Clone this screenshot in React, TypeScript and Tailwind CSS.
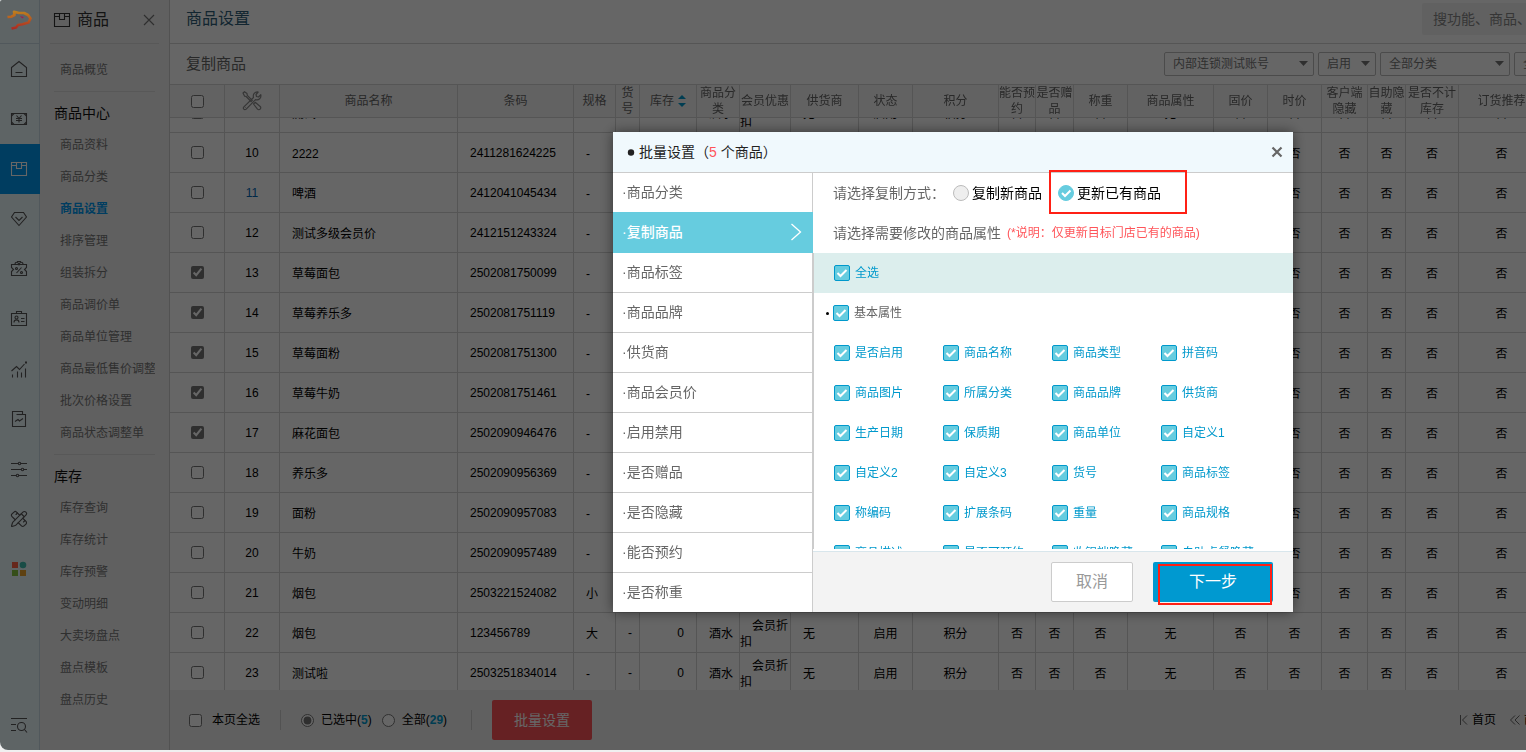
import { useEffect, useRef, useState } from 'react'
import type { ReactNode } from 'react'
import { PencilRuler } from 'lucide-react'

interface Product {
    no: number
    name: string
    code: string
    spec: string
    checked?: boolean
    visited?: boolean
}

interface Column {
    title: string
    width: number
    sortable?: boolean
}

const columns: Column[] = [
    { title: '商品名称', width: 178 },
    { title: '条码', width: 116 },
    { title: '规格', width: 42 },
    { title: '货号', width: 24 },
    { title: '库存', width: 57, sortable: true },
    { title: '商品分类', width: 43 },
    { title: '会员优惠', width: 51 },
    { title: '供货商', width: 68 },
    { title: '状态', width: 54 },
    { title: '积分', width: 86 },
    { title: '能否预约', width: 37 },
    { title: '是否赠品', width: 38 },
    { title: '称重', width: 54 },
    { title: '商品属性', width: 86 },
    { title: '固价', width: 54 },
    { title: '时价', width: 54 },
    { title: '客户端隐藏', width: 46 },
    { title: '自助隐藏', width: 38 },
    { title: '是否不计库存', width: 53 },
    { title: '订货推荐', width: 86 }
]

const products: Product[] = [
    { no: 9, name: '测试', code: '2411281623', spec: '-' },
    { no: 10, name: '2222', code: '2411281624225', spec: '-' },
    { no: 11, name: '啤酒', code: '2412041045434', spec: '-', visited: true },
    { no: 12, name: '测试多级会员价', code: '2412151243324', spec: '-' },
    { no: 13, name: '草莓面包', code: '2502081750099', spec: '-', checked: true },
    { no: 14, name: '草莓养乐多', code: '2502081751119', spec: '-', checked: true },
    { no: 15, name: '草莓面粉', code: '2502081751300', spec: '-', checked: true },
    { no: 16, name: '草莓牛奶', code: '2502081751461', spec: '-', checked: true },
    { no: 17, name: '麻花面包', code: '2502090946476', spec: '-', checked: true },
    { no: 18, name: '养乐多', code: '2502090956369', spec: '-' },
    { no: 19, name: '面粉', code: '2502090957083', spec: '-' },
    { no: 20, name: '牛奶', code: '2502090957489', spec: '-' },
    { no: 21, name: '烟包', code: '2503221524082', spec: '小' },
    { no: 22, name: '烟包', code: '123456789', spec: '大' },
    { no: 23, name: '测试啦', code: '2503251834014', spec: '-' }
]

const menuSections = [
    {
        title: '商品中心',
        items: ['商品资料', '商品分类', '商品设置', '排序管理', '组装拆分', '商品调价单', '商品单位管理', '商品最低售价调整', '批次价格设置', '商品状态调整单']
    },
    {
        title: '库存',
        items: ['库存查询', '库存统计', '库存预警', '变动明细', '大卖场盘点', '盘点模板', '盘点历史']
    }
]

const batchTabs = ['商品分类', '复制商品', '商品标签', '商品品牌', '供货商', '商品会员价', '启用禁用', '是否赠品', '是否隐藏', '能否预约', '是否称重']

const attributes = [
    '是否启用', '商品名称', '商品类型', '拼音码',
    '商品图片', '所属分类', '商品品牌', '供货商',
    '生产日期', '保质期', '商品单位', '自定义1',
    '自定义2', '自定义3', '货号', '商品标签',
    '称编码', '扩展条码', '重量', '商品规格',
    '商品描述', '是否可预约', '收银端隐藏', '自助点餐隐藏'
]

function Icon({ children }: { children: ReactNode }) {
    return (
        <svg width="18" height="18" viewBox="0 0 18 18" fill="none" stroke="currentColor" strokeWidth="1.1">
            {children}
        </svg>
    )
}

const boxPaths = (
    <>
        <path d="M1.5 2.5h15v13h-15z" />
        <path d="M6.5 2.5v6h5v-6M1.5 5.5h5M11.5 5.5h5" />
    </>
)

const railItems: { label: string; icon: ReactNode }[] = [
    {
        label: '首页',
        icon: <Icon><path d="M1.5 7.5 9 1.5l7.5 6v9h-15zM5.5 12.5h7" /></Icon>
    },
    {
        label: '销售',
        icon: (
            <Icon>
                <path d="M1.5 3.5h15v11h-15z" />
                <path d="M1.5 6 4 3.5M14 3.5 16.5 6M1.5 12 4 14.5M14 14.5l2.5-2.5" />
                <path d="m6.5 5.5 2.5 3 2.5-3M6 8.5h6M6 10.5h6M9 8.5v4" />
            </Icon>
        )
    },
    { label: '商品', icon: <Icon>{boxPaths}</Icon> },
    {
        label: '会员',
        icon: <Icon><path d="M4.5 2.5h9l3 4.5L9 15.5 1.5 7z" /><path d="m5.5 7 3.5 3.5L12.5 7" /></Icon>
    },
    {
        label: '营销',
        icon: (
            <Icon>
                <path d="M1.5 4.5h15v3l-2 2 2 2v4h-15v-4l2-2-2-2z" />
                <path d="M5 4.5c0-3 3-3 4 0 1-3 4-3 4 0M7 1.5h4" />
                <path d="m6.5 13 5-5.500" />
                <circle cx="6.5" cy="8.5" r="1" />
                <circle cx="11.5" cy="12.5" r="1" />
            </Icon>
        )
    },
    {
        label: '员工',
        icon: (
            <Icon>
                <path d="M1.5 3.5h15v12h-15z" />
                <path d="M6.5 3.5v-2h5v2" />
                <circle cx="6.5" cy="7.5" r="1.5" />
                <path d="M4 12.5c0-3.500 5-3.500 5 0M11 8.5h3.500M11 11.5h3.500" />
            </Icon>
        )
    },
    {
        label: '数据',
        icon: (
            <Icon>
                <path d="m1.5 11 5-4.500 3 3 5-5.500" />
                <path d="M2.5 14.5v3M7.5 11.5v6M11.5 12.500v5M15.5 8.5v9" />
                <path d="M15 2.5h2" strokeWidth="2" />
            </Icon>
        )
    },
    {
        label: '报表',
        icon: (
            <Icon>
                <path d="M2.5 1.5h10v3h3v12h-13z" />
                <path d="M6.5 4.5h6" />
                <path d="m5 11.500 3-2 1.500 1.500 3.500-2.500" />
            </Icon>
        )
    },
    {
        label: '设置',
        icon: (
            <Icon>
                <path d="M1 3.5h7M11 3.5h6M1 9.5h10M14 9.5h3M1 15.5h5M9 15.5h8" />
                <circle cx="9.5" cy="3.5" r="1.200" />
                <circle cx="12.500" cy="9.5" r="1.200" />
                <circle cx="7.5" cy="15.5" r="1.200" />
            </Icon>
        )
    },
    { label: '工具', icon: <PencilRuler size={18} strokeWidth={1.5} /> },
    {
        label: '应用',
        icon: (
            <svg width="18" height="18" viewBox="0 0 18 18">
                <rect x="2" y="2" width="6" height="6" fill="#ff6347" />
                <circle cx="13" cy="5" r="3.300" fill="#3fbfae" />
                <rect x="2" y="10" width="6" height="6" fill="#86c440" />
                <rect x="10" y="10" width="6" height="6" fill="#eba22b" />
            </svg>
        )
    }
]

function Logo() {
    return (
        <svg width="26" height="22" viewBox="0 0 26 22" fill="none" className="z-30">
            <defs>
                <linearGradient id="logo-stroke" x1="0" y1="0" x2="0" y2="22" gradientUnits="userSpaceOnUse">
                    <stop offset="0" stopColor="#c08a1c" />
                    <stop offset="0.5" stopColor="#b8561f" />
                    <stop offset="1" stopColor="#a81f24" />
                </linearGradient>
            </defs>
            <path
                d="M1.500 8 5 7.800 8.500 6 8 2.800 13 4h5l4 2 2.500 3.500-2 4-6 1.800-4.500.7-2 2.500-4.500 1"
                stroke="url(#logo-stroke)"
                strokeWidth="2.600"
                strokeLinejoin="round"
            />
            <path d="m14 7 4 1-1.800 1.500z" fill="#a01c50" />
        </svg>
    )
}

function Rail() {
    return (
        <aside className="flex w-10 shrink-0 flex-col border-r border-[#cbdde5] bg-[#ecf9fd] text-[#555]">
            <a href="#home" aria-label="首页" className="flex h-11 shrink-0 items-center border-b border-[#cbdde5] pb-1 pl-1.5">
                <Logo />
            </a>
            {railItems.map(item => (
                <button
                    key={item.label}
                    aria-label={item.label}
                    className={`flex h-[50px] w-10 shrink-0 items-center pl-2.5 ${item.label === '商品' ? 'bg-[#0099f0] text-white' : ''}`}
                >
                    {item.icon}
                </button>
            ))}
            <button aria-label="搜索菜单" className="mt-auto flex h-[50px] w-10 items-center pl-2.5">
                <Icon>
                    <path d="M1 2.5h16M1 8.5h5M1 14.5h5" />
                    <circle cx="11.5" cy="10.5" r="4" />
                    <path d="m14.500 13.500 2.500 3" />
                </Icon>
            </button>
        </aside>
    )
}

function SideMenu() {
    return (
        <aside className="flex w-[130px] shrink-0 flex-col border-r border-[#ccc] bg-[#f0f0f0]">
            <div className="mx-2.5 flex h-11 items-center border-b border-[#ddd] pb-1 text-[#333]">
                <div className="flex flex-1 items-center gap-1.5 pl-[3px]">
                    <Icon>{boxPaths}</Icon>
                    <h2 className="text-base leading-6">商品</h2>
                </div>
                <button aria-label="关闭菜单" className="pr-1 text-[#777]">
                    <svg width="12" height="12" viewBox="0 0 12 12" stroke="currentColor" strokeWidth="1.2">
                        <path d="m1 1 10 10M11 1 1 11" />
                    </svg>
                </button>
            </div>
            <nav className="ml-3.5 w-[101px] overflow-hidden pt-2.5 text-xs whitespace-nowrap text-[#777]">
                <a href="#overview" className="flex h-8 items-center pl-1.5">商品概览</a>
                {menuSections.map(section => (
                    <div key={section.title} className="mt-[5px] border-t border-[#ddd]">
                        <h3 className="flex h-[37px] items-center pt-[5px] text-sm text-[#111]">{section.title}</h3>
                        {section.items.map(item => (
                            <a
                                key={item}
                                href="#menu"
                                className={`flex h-8 items-center pl-1.5 ${item === '商品设置' ? 'font-bold text-[#0099f0]' : ''}`}
                            >
                                {item}
                            </a>
                        ))}
                    </div>
                ))}
            </nav>
        </aside>
    )
}

function FilterSelect({ label, value, className }: { label: string; value: string; className: string }) {
    return (
        <div className={`relative shrink-0 ${className}`}>
            <select
                aria-label={label}
                className="h-6 w-full appearance-none rounded-xs border border-[#bbb] bg-transparent pr-5 pl-2 text-xs text-[#777]"
            >
                <option>{value}</option>
            </select>
            <svg className="pointer-events-none absolute top-2.5 right-1.5" width="9" height="5" viewBox="0 0 9 5" fill="#777">
                <path d="M0 0h9L4.500 5z" />
            </svg>
        </div>
    )
}

function ToolsIcon() {
    return (
        <svg width="20" height="20" viewBox="0 0 20 20" fill="none" stroke="#888" strokeWidth="1.2" strokeLinejoin="round" className="mx-auto">
            <path d="M1 2 2.500.700 5 2.500l.3 1.800 5 5-1.200 1.200-5-5-1.600-.4z" />
            <path d="m11.500 13 1.700-1.700 5 4.200a1.800 1.800 0 0 1-2.700 2.700z" />
            <path d="M11.500 6.500c-.9-3 1.200-6 4.700-5.500l-2.200 2.500.5 2 2 .5 2.300-2.300c.7 3.500-2 5.800-5.300 4.900l-9.300 9.500c-1.700 1.600-4-.6-2.300-2.300z" />
            <path d="m3.300 16.500.4.400" />
        </svg>
    )
}

function ProductTable() {
    const scrollRef = useRef<HTMLDivElement>(null)

    useEffect(() => {
        if (scrollRef.current) scrollRef.current.scrollTop = 25
    }, [])

    return (
        <div ref={scrollRef} className="min-h-0 flex-1 overflow-auto [scrollbar-width:none]">
            <table className="w-[1375px] table-fixed border-separate border-spacing-0 text-xs leading-4 [&_td]:border-r [&_td]:border-b [&_td]:border-[#d4d4d4] [&_td:nth-child(n+8)]:pt-0.5 [&_th]:border [&_th]:border-l-0 [&_th]:border-[#d4d4d4]">
                <colgroup>
                    <col style={{ width: 55 }} />
                    <col style={{ width: 55 }} />
                    {columns.map(col => <col key={col.title} style={{ width: col.width }} />)}
                </colgroup>
                <thead className="sticky top-0 z-10 bg-[#f5f5f5] text-[#666]">
                    <tr className="h-[34px]">
                        <th className="p-0"><input type="checkbox" aria-label="全选商品" className="mx-auto block" /></th>
                        <th className="p-0"><ToolsIcon /></th>
                        {columns.map(col => (
                            <th key={col.title} className="p-0 font-normal">
                                {col.sortable ? (
                                    <button className="mx-auto flex items-center gap-1">
                                        {col.title}
                                        <svg width="8" height="12" viewBox="0 0 8 12" fill="#0099cc">
                                            <path d="M0 4h8L4 0zM0 8h8l-4 4z" />
                                        </svg>
                                    </button>
                                ) : col.title}
                            </th>
                        ))}
                    </tr>
                </thead>
                <tbody className="text-black">
                    {products.map(p => (
                        <tr key={p.no} className="h-10">
                            <td className="p-0">
                                <input type="checkbox" aria-label={`选择${p.name}`} defaultChecked={p.checked} className="mx-auto block accent-[#757575]" />
                            </td>
                            <td className={`p-0 text-center ${p.visited ? 'text-[#0066b4]' : ''}`}>{p.no}</td>
                            <td className="pt-0.5 pl-3">{p.name}</td>
                            <td className="pl-3">{p.code}</td>
                            <td className="pt-0.5 pl-3">{p.spec}</td>
                            <td className="pl-3">-</td>
                            <td className="pr-3 text-right">0</td>
                            <td className="pl-3 whitespace-nowrap">酒水</td>
                            <td className="p-0 indent-3">会员折扣</td>
                            <td className="pl-3">无</td>
                            <td className="p-0 text-center">启用</td>
                            <td className="p-0 text-center">积分</td>
                            <td className="p-0 text-center">否</td>
                            <td className="p-0 text-center">否</td>
                            <td className="p-0 text-center">否</td>
                            <td className="p-0 text-center">无</td>
                            <td className="p-0 text-center">否</td>
                            <td className="p-0 text-center">否</td>
                            <td className="p-0 text-center">否</td>
                            <td className="p-0 text-center">否</td>
                            <td className="p-0 text-center">否</td>
                            <td className="p-0 text-center">否</td>
                        </tr>
                    ))}
                </tbody>
            </table>
        </div>
    )
}

function BottomBar() {
    return (
        <footer className="flex h-[60px] shrink-0 items-center bg-[#f0f0f0] pl-[19px] text-xs text-black">
            <label className="flex items-center gap-2.5">
                <input type="checkbox" />
                本页全选
            </label>
            <span className="ml-5 h-5 w-px bg-[#ccc]" />
            <label className="ml-5 flex items-center gap-[7px]">
                <input type="radio" name="scope" defaultChecked className="accent-[#757575]" />
                <span>已选中(<b className="text-[#0099cc]">5</b>)</span>
            </label>
            <label className="ml-2.5 flex items-center gap-[7px]">
                <input type="radio" name="scope" />
                <span>全部(<b className="text-[#0099cc]">29</b>)</span>
            </label>
            <span className="ml-6 h-5 w-px bg-[#ccc]" />
            <button className="ml-5 h-10 w-[100px] rounded-xs bg-[#ff5459] text-sm text-white">批量设置</button>
            <div className="ml-auto flex w-[66px] gap-3.5 overflow-hidden whitespace-nowrap">
                <button className="flex shrink-0 items-center gap-1">
                    <svg width="8" height="10" viewBox="0 0 8 10" fill="none" stroke="#666">
                        <path d="M.5 0v10M7 .5 2.500 5 7 9.500" />
                    </svg>
                    首页
                </button>
                <button className="flex shrink-0 items-center gap-1">
                    <svg width="10" height="10" viewBox="0 0 10 10" fill="none" stroke="#666">
                        <path d="M5 .5.500 5 5 9.500M9.500.500 5 5l4.500 4.500" />
                    </svg>
                    前页
                </button>
            </div>
        </footer>
    )
}

function CheckItem({ label, className = 'text-[#0099cc]' }: { label: string; className?: string }) {
    return (
        <label className={`flex h-10 items-center gap-[5px] text-xs whitespace-nowrap ${className}`}>
            <span className="grid size-4">
                <input
                    type="checkbox"
                    defaultChecked
                    className="peer col-start-1 row-start-1 size-4 appearance-none rounded-xs border border-[#0099cc] checked:bg-[#66ccdf]"
                />
                <svg className="pointer-events-none invisible col-start-1 row-start-1 peer-checked:visible" width="16" height="16" viewBox="0 0 16 16" fill="none" stroke="#fff" strokeWidth="2">
                    <path d="m3.500 8 3 3 6-6" />
                </svg>
            </span>
            {label}
        </label>
    )
}

function ModeRadio({ label, checked, onChange }: { label: string; checked: boolean; onChange: () => void }) {
    return (
        <label className="flex items-center gap-[3px] text-black">
            <span className="grid size-4">
                <input
                    type="radio"
                    name="copy-mode"
                    checked={checked}
                    onChange={onChange}
                    className="peer col-start-1 row-start-1 size-4 appearance-none rounded-full border border-[#bbb] bg-[#eee] checked:border-[#66ccdf] checked:bg-[#66ccdf]"
                />
                <svg className="pointer-events-none invisible col-start-1 row-start-1 peer-checked:visible" width="16" height="16" viewBox="0 0 16 16" fill="none" stroke="#fff" strokeWidth="2">
                    <path d="m4 8 3 3 5.500-5.500" />
                </svg>
            </span>
            {label}
        </label>
    )
}

function BatchDialog() {
    const [tab, setTab] = useState('复制商品')
    const [mode, setMode] = useState('update')

    return (
        <div
            role="dialog"
            aria-labelledby="batch-title"
            className="absolute top-[132px] left-[613px] flex h-[480px] w-[680px] flex-col bg-white text-sm text-[#666] shadow-[0_0_12px_rgba(0,0,0,0.5)]"
        >
            <header className="flex h-[41px] shrink-0 items-center justify-between border-b border-[#ccc] bg-[#f0f9fd] pr-2.5 pl-3.5">
                <h2 id="batch-title" className="flex items-center gap-1 text-[#222]">
                    <svg width="8" height="8" viewBox="0 0 8 8" fill="currentColor"><circle cx="4" cy="4.500" r="3.200" /></svg>
                    <span>批量设置（<span className="text-[#ff5459]">5</span> 个商品）</span>
                </h2>
                <button aria-label="关闭">
                    <svg width="12" height="12" viewBox="0 0 12 12" stroke="#666" strokeWidth="2.200">
                        <path d="m1.500 1.500 9 9M10.500 1.500l-9 9" />
                    </svg>
                </button>
            </header>
            <div className="flex min-h-0 flex-1">
                <ul className="w-[200px] shrink-0 overflow-y-clip border-r border-[#ccc]">
                    {batchTabs.map(name => (
                        <li key={name}>
                            <button
                                onClick={() => setTab(name)}
                                className={name === tab
                                    ? 'relative -mt-px flex h-[41px] w-[200px] items-center justify-between bg-[#66ccdf] pr-[11px] pb-0.5 pl-[9px] font-medium text-white'
                                    : 'flex h-10 w-full items-center border-b border-[#ccc] pb-0.5 pl-[9px]'}
                            >
                                ·{name}
                                {name === tab && (
                                    <svg width="12" height="18" viewBox="0 0 12 18" fill="none" stroke="currentColor" strokeWidth="1.3">
                                        <path d="m1.500 1 9 8-9 8" />
                                    </svg>
                                )}
                            </button>
                        </li>
                    ))}
                </ul>
                <section className="flex min-w-0 flex-1 flex-col">
                    <div className="flex h-10 shrink-0 items-center pl-5">
                        <span className="mr-2">请选择复制方式：</span>
                        <ModeRadio label="复制新商品" checked={mode === 'new'} onChange={() => setMode('new')} />
                        <span className="relative ml-4">
                            <ModeRadio label="更新已有商品" checked={mode === 'update'} onChange={() => setMode('update')} />
                            <span className="pointer-events-none absolute -top-[13px] -right-[26px] -bottom-[11px] -left-[9px] border-2 border-[#ff2015]" />
                        </span>
                    </div>
                    <p className="flex h-10 shrink-0 items-center gap-1.5 pl-5">
                        请选择需要修改的商品属性
                        <span className="text-xs text-[#ff5459]">(*说明：仅更新目标门店已有的商品)</span>
                    </p>
                    <div className="mb-0.5 min-h-0 flex-1 overflow-y-auto border-l border-[#ccc] [scrollbar-width:none]">
                        <div className="bg-[#dceeed] pl-5">
                            <CheckItem label="全选" />
                        </div>
                        <div className="flex items-center gap-1 pl-2.5">
                            <span className="ml-0.5 size-[3px] rounded-full bg-black" />
                            <CheckItem label="基本属性" className="text-[#666]" />
                        </div>
                        <div className="grid grid-cols-[repeat(4,109px)] pl-5">
                            {attributes.map(name => <CheckItem key={name} label={name} />)}
                        </div>
                    </div>
                    <div className="flex h-[61px] shrink-0 items-center justify-end gap-5 border-t border-[#d8e6ec] bg-[#f3f3f3] pr-5 text-base">
                        <button className="h-10 w-[82px] rounded-xs border border-[#ccc] bg-white text-[#999]">取消</button>
                        <span className="relative">
                            <button className="h-10 w-[120px] rounded-xs bg-[#0099d0] text-white">下一步</button>
                            <span className="pointer-events-none absolute top-0.5 right-px -bottom-[3px] left-[5px] border-2 border-[#ff2015]" />
                        </span>
                    </div>
                </section>
            </div>
        </div>
    )
}

export default function App() {
    return (
        <div className="h-screen bg-[#f0f0f0] pb-0.5 font-['Liberation_Sans','Noto_Sans_CJK_SC',sans-serif]">
            <div className="relative flex h-full overflow-hidden rounded-tl-xs rounded-bl-lg bg-white">
                <Rail />
                <SideMenu />
                <main className="flex min-w-0 flex-1 flex-col">
                    <header className="flex h-11 shrink-0 items-center justify-between border-b border-[#d4d4d4] pb-1.5 pl-4">
                        <h1 className="text-base leading-6 text-[#2d5d78]">商品设置</h1>
                        <input
                            type="text"
                            aria-label="搜索"
                            placeholder="搜功能、商品、"
                            className="h-8 w-[104px] rounded-l-xs bg-[#f3f3f3] pl-[11px] text-sm placeholder:text-[#888]"
                        />
                    </header>
                    <div className="flex h-10 shrink-0 items-center justify-between pl-4">
                        <h2 className="text-[15px] text-[#666]">复制商品</h2>
                        <div className="mb-0.5 flex w-[362px] gap-1 overflow-hidden">
                            <FilterSelect label="门店" value="内部连锁测试账号" className="w-[150px]" />
                            <FilterSelect label="状态" value="启用" className="w-[58px]" />
                            <FilterSelect label="分类" value="全部分类" className="w-[130px]" />
                            <FilterSelect label="标签" value="全部标签" className="w-[130px]" />
                        </div>
                    </div>
                    <ProductTable />
                    <BottomBar />
                </main>
                <div className="absolute inset-0 z-20 bg-black/60" />
                <div className="absolute inset-0 z-20">
                    <BatchDialog />
                </div>
            </div>
        </div>
    )
}
